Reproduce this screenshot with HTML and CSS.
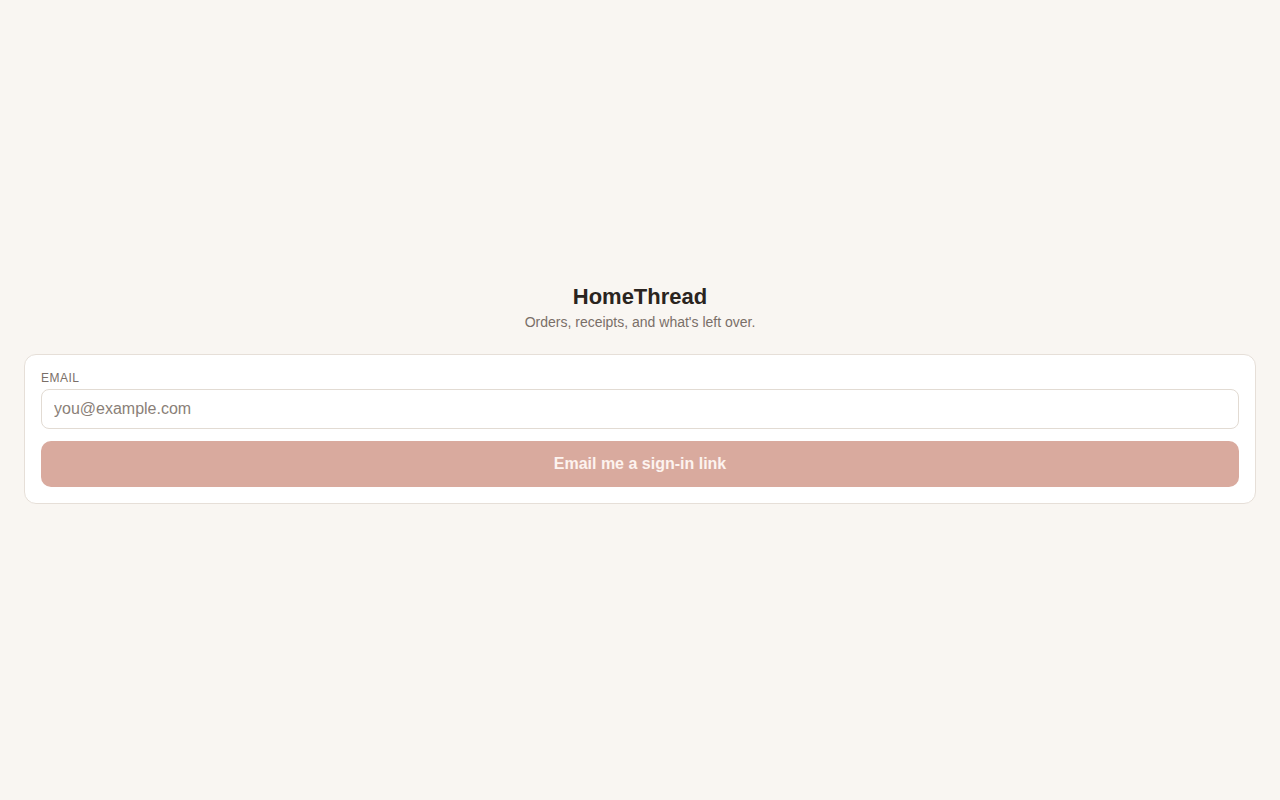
FILE: index.html
```html
<!DOCTYPE html>
<html lang="en">
<head>
<meta charset="utf-8">
<title>HomeThread</title>
<link rel="stylesheet" href="styles.css">
</head>
<body>
<main class="page">
  <header class="brand">
    <h1 class="brand-title">HomeThread</h1>
    <p class="brand-sub">Orders, receipts, and what's left over.</p>
  </header>
  <form class="card">
    <label class="field-label" for="email">Email</label>
    <input class="field-input" id="email" type="email" placeholder="you@example.com">
    <button class="submit" type="button">Email me a sign-in link</button>
  </form>
</main>
</body>
</html>
```

FILE: styles.css
```css
* { box-sizing: border-box; }
html, body { margin: 0; padding: 0; }
body {
  background: #f9f6f2;
  font-family: "Liberation Sans", Arial, sans-serif;
  color: #2a2420;
}
.page {
  min-height: 100vh;
  display: flex;
  flex-direction: column;
  justify-content: center;
  padding: 0 24px 15px;
}
.brand { text-align: center; margin-bottom: 22px; }
.brand-title {
  margin: 0;
  font-size: 22px;
  line-height: 30px;
  font-weight: 700;
  color: #2a2420;
}
.brand-sub {
  margin: 0;
  font-size: 14px;
  line-height: 20px;
  color: #7a6f68;
}
.card {
  background: #ffffff;
  border: 1px solid #e6dfd8;
  border-radius: 12px;
  padding: 16px;
  display: flex;
  flex-direction: column;
}
.field-label {
  font-size: 12px;
  line-height: 14px;
  letter-spacing: 0.5px;
  text-transform: uppercase;
  color: #7a6f68;
  margin-bottom: 4px;
}
.field-input {
  height: 40px;
  border: 1px solid #e2dbd3;
  border-radius: 8px;
  padding: 0 12px;
  font-family: inherit;
  font-size: 16px;
  color: #2a2420;
  background: #fff;
  outline: none;
}
.field-input::placeholder { color: #8a7f78; opacity: 1; }
.submit {
  margin-top: 12px;
  height: 46px;
  border: 0;
  border-radius: 10px;
  background: #d9aa9e;
  color: #fdf3ef;
  font-family: inherit;
  font-size: 16px;
  font-weight: 700;
  cursor: pointer;
}
```
